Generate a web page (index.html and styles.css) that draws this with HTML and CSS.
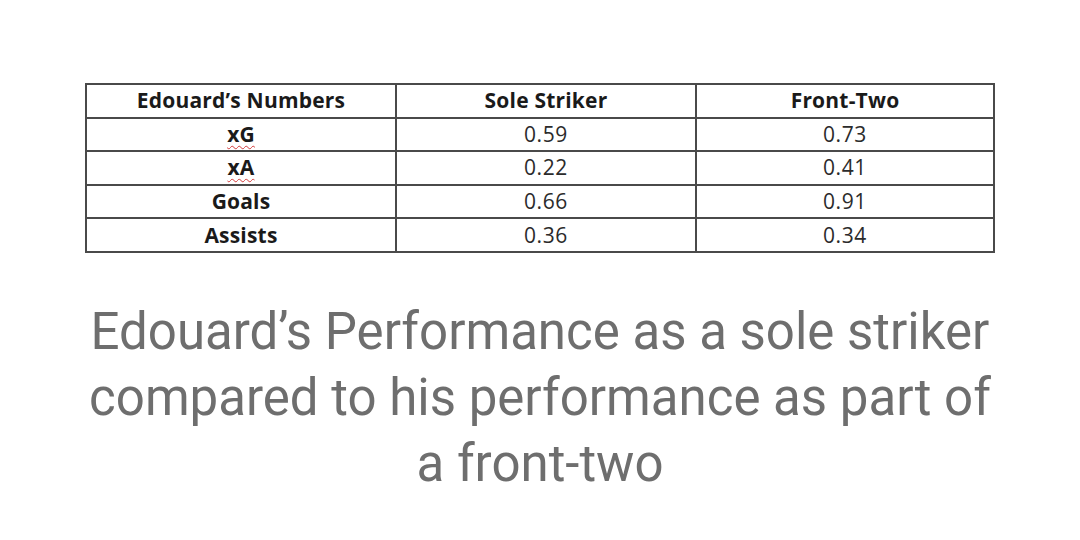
FILE: index.html
```html
<!DOCTYPE html>
<html>
<head>
<meta charset="utf-8">
<link rel="stylesheet" href="styles.css">
</head>
<body>
<div class="page">
  <table class="stats">
    <colgroup>
      <col class="c1">
      <col class="c2">
      <col class="c3">
    </colgroup>
    <tr class="head">
      <th>Edouard’s Numbers</th>
      <th>Sole Striker</th>
      <th>Front-Two</th>
    </tr>
    <tr><th><span class="spell">xG</span></th><td>0.59</td><td>0.73</td></tr>
    <tr><th><span class="spell">xA</span></th><td>0.22</td><td>0.41</td></tr>
    <tr><th>Goals</th><td>0.66</td><td>0.91</td></tr>
    <tr><th>Assists</th><td>0.36</td><td>0.34</td></tr>
  </table>
  <p class="caption">Edouard’s Performance as a sole striker compared to his performance as part of a front-two</p>
</div>
</body>
</html>
```

FILE: styles.css
```css
html, body {
  margin: 0;
  padding: 0;
  background: #ffffff;
}
.page {
  width: 1080px;
  height: 540px;
  padding-top: 83px;
  box-sizing: border-box;
  overflow: hidden;
}
.stats {
  margin-left: 85px;
  width: 910px;
  border-collapse: collapse;
  font-family: "Open Sans", "Noto Sans", sans-serif;
  font-size: 21px;
  color: #1a1a1a;
  table-layout: fixed;
}
.stats th, .stats td {
  border: 2px solid #4a4a4a;
  height: 31.6px;
  padding: 0;
  text-align: center;
  vertical-align: middle;
  line-height: 1;
}
.stats th {
  font-weight: 700;
  letter-spacing: 0.2px;
}
.stats td {
  font-weight: 400;
  color: #2b2b2b;
  letter-spacing: 0.6px;
}
.c1 { width: 310px; }
.c2 { width: 300px; }
.spell {
  text-decoration: underline wavy #d23a3a;
  text-decoration-thickness: 1px;
  text-underline-offset: 3px;
}
.caption {
  margin: 46px auto 0;
  width: 920px;
  text-align: center;
  font-family: Roboto, "Liberation Sans", sans-serif;
  font-size: 51px;
  line-height: 66px;
  color: #6e6e6e;
}
```
